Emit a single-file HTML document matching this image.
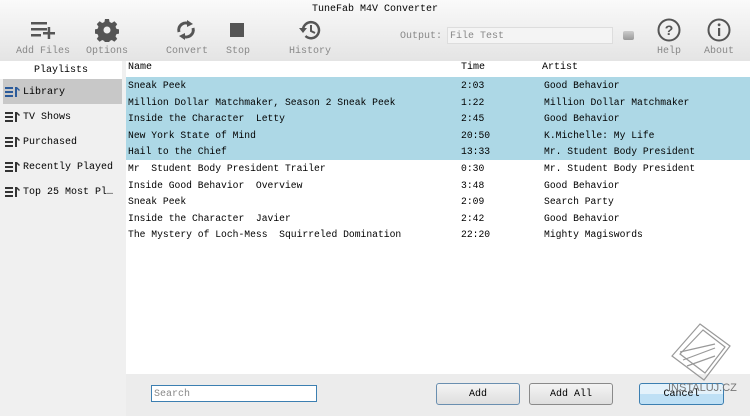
<!DOCTYPE html>
<html><head><style>
*{margin:0;padding:0;box-sizing:border-box}
body{width:750px;height:416px;overflow:hidden;background:#f0f0f0;font-family:"Liberation Mono","Noto Sans CJK SC",monospace;font-size:10px;color:#000;position:relative}
.tb{position:absolute;left:0;top:0;width:750px;height:61px;background:linear-gradient(#fafafa,#e4e4e4)}
.title{position:absolute;top:4px;left:0;width:750px;text-align:center;font-size:10px}
.lbl{position:absolute;top:46px;color:#888;font-size:10px}
.ic{position:absolute}
.side{position:absolute;left:0;top:61px;width:125px;height:355px;background:#f0f0f0}
.side .h{height:18px;text-align:center;background:#fff;line-height:19px;width:122px}
.item{position:relative;height:25px;line-height:27px;padding-left:23px;font-size:10px}
.item.sel{background:#c8c8c8;margin:0 3px;padding-left:20px}
.item svg{position:absolute;left:5px;top:8px}
.item.sel svg{left:2px}
.main{position:absolute;left:126px;top:61px;width:624px;height:313px;background:#fff}
.hdr{height:16px;line-height:14px;position:relative}
.row{height:16.6px;line-height:18px;position:relative;white-space:pre;font-size:9.7px}
.row.s{background:#add8e6}
.c1{position:absolute;left:2px}.c2{position:absolute;left:335px}.c3{position:absolute;left:418px}
.bot{position:absolute;left:126px;top:374px;width:624px;height:42px;background:#ececec}
.search{position:absolute;left:151px;top:385px;width:166px;height:17px;border:1px solid #3c7fb1;background:#fff;color:#888;line-height:17px;padding-left:2px}
.btn{position:absolute;top:383px;height:22px;border:1px solid #8a8a8a;border-radius:3px;background:linear-gradient(#f4f4f4,#dedede);text-align:center;line-height:22px}
</style></head><body>
<div class="tb">
<div class="title">TuneFab M4V Converter</div>
<svg class="ic" style="left:30px;top:20px" width="26" height="20"><g fill="#555"><rect x="1" y="2" width="16" height="2.5"/><rect x="1" y="8" width="16" height="2.5"/><rect x="1" y="14" width="10" height="2.5"/><rect x="13" y="12" width="12" height="2.5"/><rect x="17.7" y="7" width="2.5" height="12"/></g></svg>
<svg class="ic" style="left:95px;top:18px" width="24" height="24" viewBox="0 0 24 24"><path fill="#555" d="M10 1h4l.6 3 2.2 1 2.6-1.7 2.8 2.8-1.7 2.6 1 2.2 3 .6v4l-3 .6-1 2.2 1.7 2.6-2.8 2.8-2.6-1.7-2.2 1-.6 3h-4l-.6-3-2.2-1-2.6 1.7-2.8-2.8 1.7-2.6-1-2.2-3-.6v-4l3-.6 1-2.2-1.7-2.6 2.8-2.8 2.6 1.7 2.2-1z"/><circle cx="12" cy="12" r="3.5" fill="#eee"/></svg>
<svg class="ic" style="left:175px;top:19px" width="22" height="22" viewBox="0 0 22 22"><path d="M4 13a7 7 0 0 1 11-7.5" stroke="#555" stroke-width="3" fill="none"/><path d="M18 9a7 7 0 0 1-11 7.5" stroke="#555" stroke-width="3" fill="none"/><path d="M12 1l6 4-6 3z" fill="#555"/><path d="M10 21l-6-4 6-3z" fill="#555"/></svg>
<div class="ic" style="left:230px;top:23px;width:14px;height:14px;background:#555"></div>
<svg class="ic" style="left:298px;top:18px" width="24" height="24" viewBox="0 0 24 24"><path d="M5 12a8 8 0 1 1 2.5 6" stroke="#555" stroke-width="2.5" fill="none"/><path d="M1 10l4 5 4-5z" fill="#555"/><path d="M13 7v6l4 2" stroke="#555" stroke-width="2" fill="none"/></svg>
<div class="lbl" style="left:16px">Add Files</div>
<div class="lbl" style="left:86px">Options</div>
<div class="lbl" style="left:166px">Convert</div>
<div class="lbl" style="left:226px">Stop</div>
<div class="lbl" style="left:289px">History</div>
<div class="lbl" style="left:400px;top:31px">Output:</div>
<div style="position:absolute;left:447px;top:27px;width:166px;height:17px;background:#f4f4f4;border:1px solid #ddd;color:#888;line-height:17px;padding-left:2px">File Test</div>
<div style="position:absolute;left:623px;top:31px;width:11px;height:9px;background:linear-gradient(#ccc,#999);border-radius:2px"></div>
<svg class="ic" style="left:657px;top:18px" width="24" height="24"><circle cx="12" cy="12" r="10.5" stroke="#555" stroke-width="2" fill="none"/><text x="12" y="17" text-anchor="middle" font-family="Liberation Sans" font-weight="bold" font-size="14" fill="#555">?</text></svg>
<svg class="ic" style="left:707px;top:18px" width="24" height="24"><circle cx="12" cy="12" r="10.5" stroke="#555" stroke-width="2" fill="none"/><rect x="11" y="10" width="2.2" height="8" fill="#555"/><circle cx="12.1" cy="6.8" r="1.4" fill="#555"/></svg>
<div class="lbl" style="left:657px">Help</div>
<div class="lbl" style="left:704px">About</div>
</div>
<div class="side">
<div class="h">Playlists</div>
<div class="item sel"><svg width="15" height="12"><g fill="#2a5a9a"><rect y="0" width="8" height="2"/><rect y="4" width="8" height="2"/><rect y="8" width="8" height="2"/><rect x="10" y="0" width="2" height="10"/><path d="M12 0l3 3-1 1-2-2z"/></g></svg>Library</div>
<div class="item"><svg width="15" height="12"><g fill="#333"><rect y="0" width="8" height="2"/><rect y="4" width="8" height="2"/><rect y="8" width="8" height="2"/><rect x="10" y="0" width="2" height="10"/><path d="M12 0l3 3-1 1-2-2z"/></g></svg>TV Shows</div>
<div class="item"><svg width="15" height="12"><g fill="#333"><rect y="0" width="8" height="2"/><rect y="4" width="8" height="2"/><rect y="8" width="8" height="2"/><rect x="10" y="0" width="2" height="10"/><path d="M12 0l3 3-1 1-2-2z"/></g></svg>Purchased</div>
<div class="item"><svg width="15" height="12"><g fill="#333"><rect y="0" width="8" height="2"/><rect y="4" width="8" height="2"/><rect y="8" width="8" height="2"/><rect x="10" y="0" width="2" height="10"/><path d="M12 0l3 3-1 1-2-2z"/></g></svg>Recently Played</div>
<div class="item"><svg width="15" height="12"><g fill="#333"><rect y="0" width="8" height="2"/><rect y="4" width="8" height="2"/><rect y="8" width="8" height="2"/><rect x="10" y="0" width="2" height="10"/><path d="M12 0l3 3-1 1-2-2z"/></g></svg>Top 25 Most Pl…</div>
</div>
<div class="main">
<div class="hdr"><span class="c1">Name</span><span class="c2">Time</span><span class="c3" style="left:416px">Artist</span></div>
<div class="row s"><span class="c1">Sneak Peek</span><span class="c2">2:03</span><span class="c3">Good Behavior</span></div>
<div class="row s"><span class="c1">Million Dollar Matchmaker, Season 2 Sneak Peek</span><span class="c2">1:22</span><span class="c3">Million Dollar Matchmaker</span></div>
<div class="row s"><span class="c1">Inside the Character  Letty</span><span class="c2">2:45</span><span class="c3">Good Behavior</span></div>
<div class="row s"><span class="c1">New York State of Mind</span><span class="c2">20:50</span><span class="c3">K.Michelle: My Life</span></div>
<div class="row s"><span class="c1">Hail to the Chief</span><span class="c2">13:33</span><span class="c3">Mr. Student Body President</span></div>
<div class="row"><span class="c1">Mr  Student Body President Trailer</span><span class="c2">0:30</span><span class="c3">Mr. Student Body President</span></div>
<div class="row"><span class="c1">Inside Good Behavior  Overview</span><span class="c2">3:48</span><span class="c3">Good Behavior</span></div>
<div class="row"><span class="c1">Sneak Peek</span><span class="c2">2:09</span><span class="c3">Search Party</span></div>
<div class="row"><span class="c1">Inside the Character  Javier</span><span class="c2">2:42</span><span class="c3">Good Behavior</span></div>
<div class="row"><span class="c1">The Mystery of Loch-Mess  Squirreled Domination</span><span class="c2">22:20</span><span class="c3">Mighty Magiswords</span></div>
</div>
<div class="bot"></div>
<div class="search">Search</div>
<div class="btn" style="left:436px;width:84px;border-color:#6a8fb0">Add</div>
<div class="btn" style="left:529px;width:84px">Add All</div>
<div class="btn" style="left:639px;width:85px;border-color:#3c7fb1;background:linear-gradient(#e4f2fb 50%,#bfe0f5 50%)">Cancel</div>
<svg style="position:absolute;left:665px;top:322px" width="70" height="62"><g stroke="#999" fill="none" stroke-width="1.2"><path d="M35 2l30 22-26 34-32-24z"/><path d="M38 8l22 17-20 26-25-19z"/><path d="M15 30l35-8M18 38l32-12M22 44l28-10"/></g></svg>
<div style="position:absolute;left:668px;top:382px;font-family:'Liberation Sans',sans-serif;font-size:11px;color:#777">INSTALUJ.CZ</div>
</body></html>
